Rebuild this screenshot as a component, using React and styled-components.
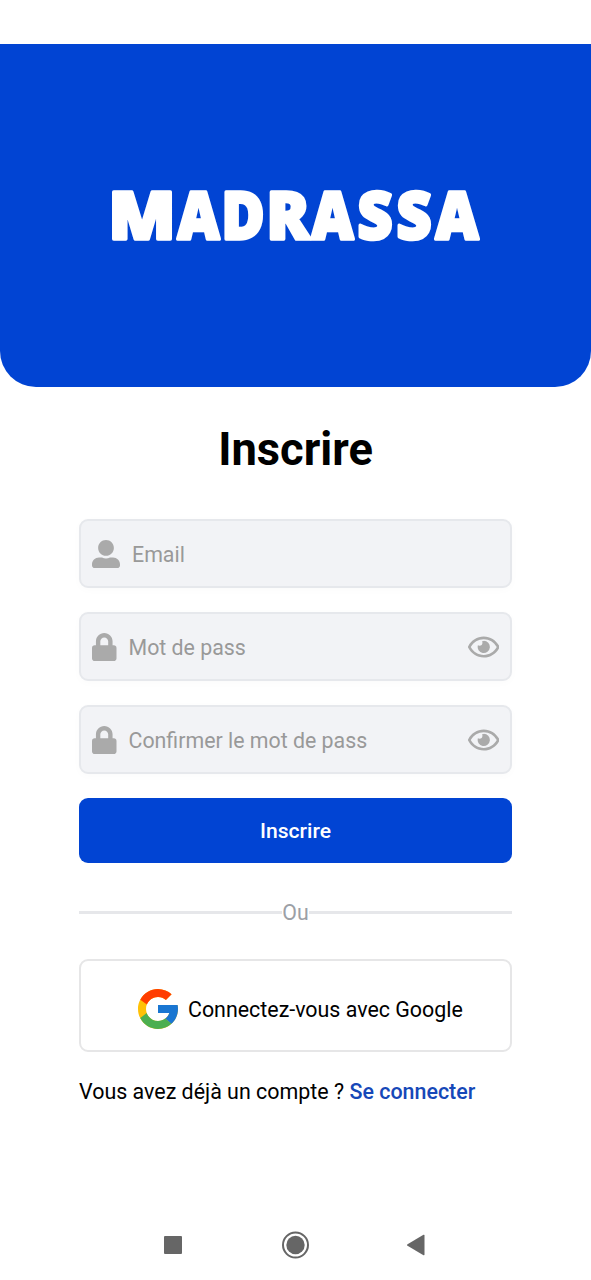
import React from 'react';
import styled, { createGlobalStyle } from 'styled-components';
import { FaUserAlt, FaLock, FaRegEye } from 'react-icons/fa';

const GlobalStyle = createGlobalStyle`
  * { box-sizing: border-box; }
  body {
    margin: 0;
    background: #fff;
    font-family: Roboto, "Liberation Sans", sans-serif;
  }
`;

const Screen = styled.div`
  display: flex;
  flex-direction: column;
  width: 591px;
  height: 1280px;
  padding-top: 44px;
  background: #fff;
  overflow: hidden;
`;

const Hero = styled.header`
  display: flex;
  justify-content: center;
  flex: none;
  height: 343px;
  padding-top: 126px;
  background: #0144d3;
  border-radius: 0 0 36px 36px;
`;

const Wordmark = styled.svg`
  display: block;
  width: 431px;
  height: 100px;
  overflow: visible;
  font-family: "Open Sans", sans-serif;
  font-weight: 800;
  font-size: 66px;
  fill: #fff;
  stroke: #fff;
  stroke-width: 3.5px;
  stroke-linejoin: round;
`;

const Title = styled.h1`
  margin: 36px 0 0;
  height: 54px;
  line-height: 54px;
  text-align: center;
  font-size: 45.3px;
  font-weight: 700;
  color: #000;
`;

const Form = styled.main`
  display: flex;
  flex-direction: column;
  width: 433px;
  margin: 42px 0 0 79px;
`;

const Field = styled.label`
  display: flex;
  align-items: center;
  height: 69px;
  margin-bottom: 24px;
  padding: 0 11px;
  border: 2px solid #e6e8ec;
  border-radius: 9px;
  background: #f2f3f6;
  box-shadow: 0 2px 8px rgba(0, 0, 0, 0.02);
  color: #aaa;

  svg {
    display: block;
    flex: none;
    height: 28px;
  }
`;

const UserIcon = styled(FaUserAlt)`
  width: 28px;
`;

const LockIcon = styled(FaLock)`
  width: 24.5px;
`;

const EyeIcon = styled(FaRegEye)`
  width: 31.5px;
`;

const Input = styled.input`
  flex: 1;
  min-width: 0;
  margin-left: 12px;
  padding: 2px 0 0;
  border: 0;
  outline: 0;
  background: none;
  font: 400 21.35px/28px Roboto, sans-serif;

  &::placeholder { color: #999; opacity: 1; }
`;

const Submit = styled.button`
  height: 65px;
  padding: 1px 0 0;
  border: 0;
  border-radius: 9px;
  background: #0144d3;
  color: #fff;
  font: 500 21.1px/28px Roboto, sans-serif;
`;

const Divider = styled.div`
  display: flex;
  align-items: center;
  height: 28px;
  margin-top: 35px;
  color: #9ca0a6;
  font-size: 21.3px;

  &::before, &::after {
    content: "";
    flex: 1;
    height: 3px;
    background: #e6e7ea;
  }
`;

const GoogleButton = styled.button`
  display: flex;
  align-items: center;
  height: 93px;
  margin-top: 33px;
  padding: 9px 0 0 53px;
  border: 2px solid #e6e6e7;
  border-radius: 9px;
  background: #fff;
  color: #000;
  font: 400 21.4px/28px Roboto, sans-serif;
  white-space: nowrap;
`;

const GoogleMark = styled.svg`
  flex: none;
  width: 48px;
  height: 48px;
  margin: 0 6px 3px 0;
`;

const Footer = styled.p`
  margin: 26px 0 0;
  font-size: 21.43px;
  line-height: 28px;
  color: #000;
  white-space: nowrap;
`;

const Link = styled.a`
  color: #1648b8;
  font-weight: 500;
`;

const SystemBar = styled.nav`
  display: flex;
  justify-content: space-between;
  align-items: center;
  height: 30px;
  margin: auto 165px 20px 163px;

  svg { display: block; fill: #666; }
`;

const letters = [
  ['M', 28.5, 67],
  ['A', 97.5, 42],
  ['D', 141.5, 43],
  ['R', 186.5, 43],
  ['A', 231.5, 42],
  ['S', 277.5, 35],
  ['S', 316.5, 35],
  ['A', 355.5, 43],
];

export default function App() {
  return (
    <>
      <GlobalStyle />
      <Screen>
        <Hero>
          <Wordmark viewBox="0 0 431 100" role="img" aria-label="MADRASSA">
            <text y="69">
              {letters.map(([letter, x, width]) => (
                <tspan key={x} x={x} textLength={width} lengthAdjust="spacingAndGlyphs">{letter}</tspan>
              ))}
            </text>
          </Wordmark>
        </Hero>
        <Title>Inscrire</Title>
        <Form>
          <Field><UserIcon /><Input type="email" placeholder="Email" /></Field>
          <Field>
            <LockIcon />
            <Input type="password" placeholder="Mot de pass" />
            <EyeIcon />
          </Field>
          <Field>
            <LockIcon />
            <Input type="password" placeholder="Confirmer le mot de pass" />
            <EyeIcon />
          </Field>
          <Submit type="button">Inscrire</Submit>
          <Divider>Ou</Divider>
          <GoogleButton type="button">
            <GoogleMark viewBox="0 0 48 48">
              <path fill="#ffc107" d="M43.6 20.1H42V20H24v8h11.3C33.7 32.7 29.2 36 24 36c-6.600 0-12-5.400-12-12s5.400-12 12-12c3.100 0 5.800 1.200 7.900 3l5.700-5.700C34 6.100 29.300 4 24 4 13 4 4 13 4 24s9 20 20 20 20-9 20-20c0-1.300-.1-2.700-.4-3.900z" />
              <path fill="#ff3d00" d="M6.300 14.700l6.600 4.800C14.700 15.100 19 12 24 12c3.100 0 5.800 1.200 7.900 3l5.700-5.700C34 6.100 29.300 4 24 4 16.300 4 9.700 8.300 6.300 14.700z" />
              <path fill="#4caf50" d="M24 44c5.200 0 9.900-2 13.400-5.200l-6.200-5.200C29.200 35.100 26.700 36 24 36c-5.200 0-9.600-3.300-11.300-7.900l-6.500 5C9.500 39.600 16.200 44 24 44z" />
              <path fill="#1976d2" d="M43.600 20.100H42V20H24v8h11.300c-.8 2.200-2.200 4.200-4.100 5.600l6.200 5.200C37 39.200 44 34 44 24c0-1.300-.1-2.700-.4-3.900z" />
            </GoogleMark>
            Connectez-vous avec Google
          </GoogleButton>
          <Footer>Vous avez déjà un compte ? <Link>Se connecter</Link></Footer>
        </Form>
        <SystemBar>
          <svg width="19" height="18"><rect x="1" width="18" height="18" rx="1" /></svg>
          <svg width="28" height="28">
            <circle cx="14.500" cy="14" r="12.500" style={{ fill: 'none' }} stroke="#666" strokeWidth="2" />
            <circle cx="14.500" cy="14" r="9.200" />
          </svg>
          <svg width="19" height="22"><path d="M.5 10.200 16.500.8q1-.5 1 .6v19.200q0 1.100-1 .6L.5 11.800q-1-.8 0-1.600z" /></svg>
        </SystemBar>
      </Screen>
    </>
  );
}
